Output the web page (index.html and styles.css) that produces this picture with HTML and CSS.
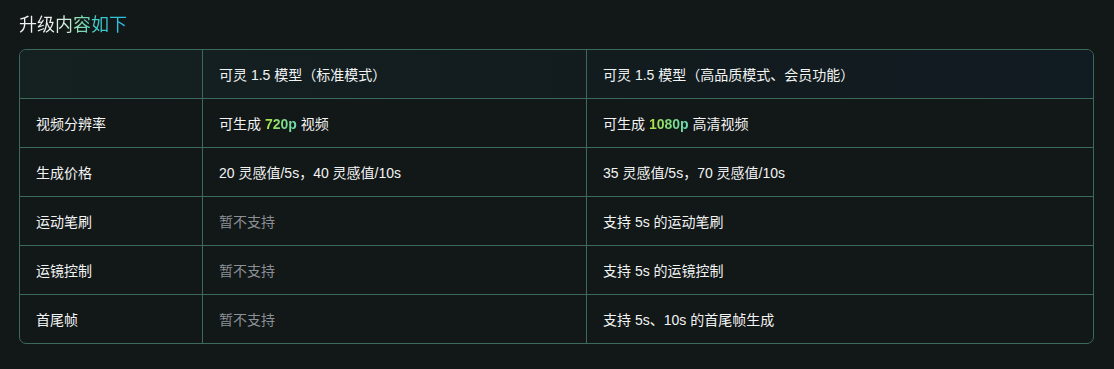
FILE: index.html
```html
<!DOCTYPE html>
<html lang="zh">
<head>
<meta charset="utf-8">
<link rel="stylesheet" href="styles.css">
</head>
<body>
<div class="page">
  <h2 class="title"><span class="grad">升级内容如下</span></h2>
  <div class="table-wrap">
    <table class="cmp">
      <thead>
        <tr>
          <th class="c1"></th>
          <th class="c2">可灵 1.5 模型（标准模式）</th>
          <th class="c3">可灵 1.5 模型（高品质模式、会员功能）</th>
        </tr>
      </thead>
      <tbody>
        <tr>
          <td>视频分辨率</td>
          <td>可生成 <b class="hl">720p</b> 视频</td>
          <td>可生成 <b class="hl">1080p</b> 高清视频</td>
        </tr>
        <tr>
          <td>生成价格</td>
          <td>20 灵感值/5s，40 灵感值/10s</td>
          <td>35 灵感值/5s，70 灵感值/10s</td>
        </tr>
        <tr>
          <td>运动笔刷</td>
          <td class="muted">暂不支持</td>
          <td>支持 5s 的运动笔刷</td>
        </tr>
        <tr>
          <td>运镜控制</td>
          <td class="muted">暂不支持</td>
          <td>支持 5s 的运镜控制</td>
        </tr>
        <tr>
          <td>首尾帧</td>
          <td class="muted">暂不支持</td>
          <td>支持 5s、10s 的首尾帧生成</td>
        </tr>
      </tbody>
    </table>
  </div>
</div>
</body>
</html>
```

FILE: styles.css
```css
html, body {
  margin: 0;
  padding: 0;
  background: #121718;
}
.page {
  padding: 10px 19px 0 19px;
  font-family: "Liberation Sans", "Noto Sans CJK SC", sans-serif;
  color: #f2f4f3;
}
.title {
  margin: 0 0 13px 0;
  font-size: 18px;
  line-height: 26px;
  font-weight: 400;
  font-family: "Noto Sans CJK SC", sans-serif;
}
.grad {
  background: linear-gradient(90deg, #f1f3f2 0%, #eef3ef 30%, #cdeed8 45%, #7fdcad 58%, #3fcdc8 72%, #27bfe6 100%);
  -webkit-background-clip: text;
  background-clip: text;
  color: transparent;
}
.table-wrap {
  width: 1073px;
  border: 1px solid #3b6a5a;
  border-radius: 7px;
  overflow: hidden;
}
.cmp {
  width: 100%;
  border-collapse: collapse;
  table-layout: fixed;
  font-size: 14px;
}
.cmp th, .cmp td {
  height: 48px;
  padding: 0 16px;
  text-align: left;
  vertical-align: middle;
  border-right: 1px solid #3b6a5a;
  border-bottom: 1px solid #3b6a5a;
  font-weight: 400;
}
.cmp tr > :last-child { border-right: none; }
.cmp tbody tr:last-child td { border-bottom: none; }
.cmp thead tr {
  background: linear-gradient(90deg, #152021 0%, #121c1f 60%, #111b22 100%);
}
.c1 { width: 150px; }
.c2 { width: 351px; }
.hl {
  font-weight: 700;
  background: linear-gradient(90deg, #b2e33f 0%, #7fe080 50%, #6cd9b4 100%);
  -webkit-background-clip: text;
  background-clip: text;
  color: transparent;
}
.muted { color: #8b9094; }
```
